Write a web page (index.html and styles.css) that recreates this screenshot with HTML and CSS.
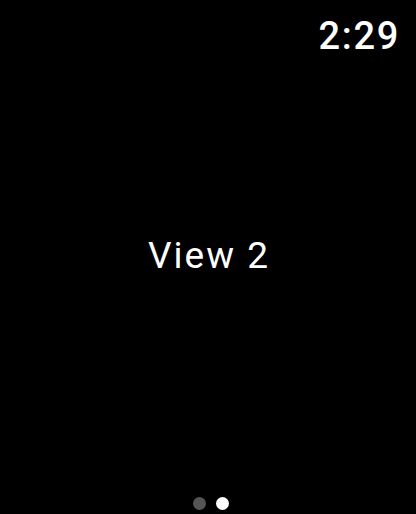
FILE: index.html
```html
<!DOCTYPE html>
<html>
<head>
<meta charset="utf-8">
<link rel="stylesheet" href="styles.css">
</head>
<body>
<div class="screen">
  <header class="status">
    <span class="time">2:29</span>
  </header>
  <main class="content">
    <span class="title">View 2</span>
  </main>
  <nav class="pager">
    <span class="dot"></span>
    <span class="dot active"></span>
  </nav>
</div>
</body>
</html>
```
FILE: styles.css
```css
html, body {
  margin: 0;
  padding: 0;
  background: #000;
}
.screen {
  width: 416px;
  height: 514px;
  display: flex;
  flex-direction: column;
  background: #000;
  color: #fff;
  font-family: Roboto, "Liberation Sans", sans-serif;
  overflow: hidden;
}
.status {
  display: flex;
  justify-content: flex-end;
  padding: 14px 16px 0 0;
  height: 50px;
  box-sizing: border-box;
}
.time {
  font-size: 38px;
  font-weight: 500;
  line-height: 44px;
  letter-spacing: 1.7px;
}
.content {
  flex: 1;
  display: flex;
  align-items: center;
  justify-content: center;
  padding-bottom: 36px;
}
.title {
  font-size: 37px;
  font-weight: 400;
  line-height: 42px;
  letter-spacing: 2px;
  padding-left: 2px;
}
.pager {
  display: flex;
  justify-content: center;
  gap: 10px;
  padding: 0 0 4px 5px;
  height: 13px;
}
.dot {
  width: 13px;
  height: 13px;
  border-radius: 50%;
  background: #555;
}
.dot.active {
  background: #fff;
}
```
